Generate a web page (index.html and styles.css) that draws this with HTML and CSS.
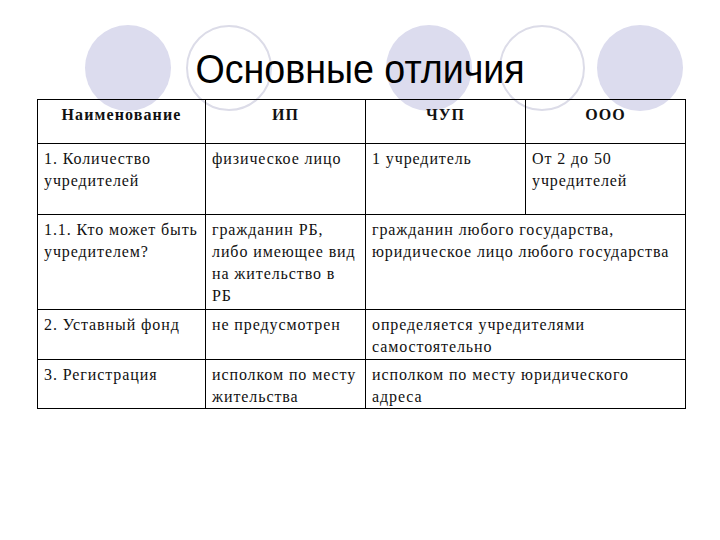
FILE: index.html
```html
<!DOCTYPE html>
<html lang="ru">
<head>
<meta charset="utf-8">
<title>Основные отличия</title>
<link rel="stylesheet" href="styles.css">
</head>
<body>
<div class="slide">
  <div class="decor" aria-hidden="true">
    <span class="circle filled c1"></span>
    <span class="circle outline c2"></span>
    <span class="circle filled c3"></span>
    <span class="circle outline c4"></span>
    <span class="circle filled c5"></span>
  </div>
  <h1 class="title"><span>Основные отличия</span></h1>
  <table class="grid">
    <colgroup>
      <col class="w1"><col class="w2"><col class="w3"><col class="w4">
    </colgroup>
    <tr class="r-head">
      <th>Наименование</th>
      <th>ИП</th>
      <th>ЧУП</th>
      <th>ООО</th>
    </tr>
    <tr class="r1">
      <td>1. Количество учредителей</td>
      <td>физическое лицо</td>
      <td>1 учредитель</td>
      <td>От 2 до 50 учредителей</td>
    </tr>
    <tr class="r2">
      <td>1.1. Кто может быть учредителем?</td>
      <td>гражданин РБ, либо имеющее вид на жительство в РБ</td>
      <td colspan="2">гражданин любого государства,<br>юридическое лицо любого государства</td>
    </tr>
    <tr class="r3">
      <td>2. Уставный фонд</td>
      <td>не предусмотрен</td>
      <td colspan="2">определяется учредителями<br>самостоятельно</td>
    </tr>
    <tr class="r4">
      <td>3. Регистрация</td>
      <td>исполком по месту жительства</td>
      <td colspan="2">исполком по месту юридического<br>адреса</td>
    </tr>
  </table>
</div>
</body>
</html>
```
FILE: styles.css
```css
html, body {
  margin: 0;
  padding: 0;
  background: #ffffff;
}

.slide {
  position: relative;
  width: 720px;
  height: 540px;
  overflow: hidden;
  display: flex;
  flex-direction: column;
  padding-top: 49px;
  box-sizing: border-box;
}

.decor {
  position: absolute;
  inset: 0;
  z-index: 0;
}

.circle {
  position: absolute;
  top: 25px;
  width: 86px;
  height: 86px;
  border-radius: 50%;
  box-sizing: border-box;
}

.circle.filled {
  background: #dcdcee;
}

.circle.outline {
  border: 2px solid #dcdce8;
  background: #ffffff;
}

.c1 { left: 85px; }
.c2 { left: 186px; }
.c3 { left: 386px; }
.c4 { left: 499px; }
.c5 { left: 597px; }

.title {
  position: relative;
  z-index: 1;
  margin: 0;
  height: 40px;
  text-align: center;
  font-family: "Liberation Sans", Arial, sans-serif;
  font-weight: normal;
  font-size: 40px;
  line-height: 40px;
  color: #000000;
}

.title span {
  display: inline-block;
  transform: scaleX(0.94);
}

.grid {
  position: relative;
  z-index: 1;
  margin: 10px 0 0 37px;
  width: 648px;
  border-collapse: collapse;
  table-layout: fixed;
  font-family: "Liberation Serif", "DejaVu Serif", serif;
  font-size: 16px;
  line-height: 22px;
  letter-spacing: 0.9px;
  color: #111111;
}

.w1 { width: 168px; }
.w2 { width: 160px; }
.w3 { width: 160px; }
.w4 { width: 160px; }

.grid th,
.grid td {
  border: 1px solid #000000;
  padding: 4px 6px 0 6px;
  vertical-align: top;
  text-align: left;
  font-family: "Liberation Serif", "DejaVu Serif", serif;
}

.grid th {
  text-align: center;
  font-weight: bold;
  font-size: 16px;
  letter-spacing: 1.1px;
  padding-top: 4px;
}

.r-head { height: 44px; }
.r1 { height: 71px; }
.r2 { height: 95px; }
.r3 { height: 50px; }
.r4 { height: 49px; }
```
